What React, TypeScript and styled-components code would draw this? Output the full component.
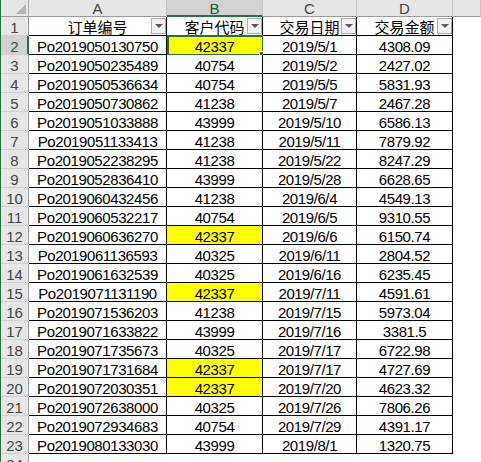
import React from "react";
import styled, { createGlobalStyle } from "styled-components";

const Global = createGlobalStyle`
  html, body { margin: 0; padding: 0; background: #ffffff; overflow: hidden; }
  body { font-family: "Liberation Sans", Arial, sans-serif; }
`;

const GREEN = "#217346";

const Sheet = styled.div`
  display: grid;
  grid-template-columns: 28px 138px 96px 94px 96px 1fr;
  grid-template-rows: 17px repeat(24, 19px);
  width: 481px;
  height: 462px;
  box-sizing: border-box;
  border-left: 1px solid ${GREEN};
  overflow: hidden;
  font-family: "Liberation Sans", Arial, sans-serif;
`;

const Corner = styled.div`
  box-sizing: border-box;
  background: #e6e6e6;
  border-right: 1px solid #ababab;
  border-bottom: 1px solid #9b9b9b;
  display: flex;
  align-items: flex-end;
  justify-content: flex-end;
  padding: 0 2px 2px 0;
`;

const ColHeader = styled.div<{ $selected?: boolean }>`
  box-sizing: border-box;
  background: ${(p) => (p.$selected ? "#d2d2d2" : "#e6e6e6")};
  border-right: 1px solid #c6c6c6;
  border-bottom: ${(p) => (p.$selected ? `2px solid ${GREEN}` : "1px solid #9b9b9b")};
  color: ${(p) => (p.$selected ? "#1d5b39" : "#444444")};
  font-size: 15px;
  line-height: 12px;
  display: flex;
  align-items: flex-end;
  justify-content: center;
  padding-bottom: ${(p) => (p.$selected ? "0px" : "1px")};
`;

const RowHeader = styled.div<{ $selected?: boolean }>`
  box-sizing: border-box;
  background: ${(p) => (p.$selected ? "#d2d2d2" : "#e6e6e6")};
  border-right: ${(p) => (p.$selected ? `2px solid ${GREEN}` : "1px solid #9b9b9b")};
  border-bottom: 1px solid #d0d0d0;
  color: ${(p) => (p.$selected ? "#1d5b39" : "#444444")};
  font-size: 15px;
  line-height: 12px;
  display: flex;
  align-items: flex-end;
  justify-content: center;
  padding-bottom: 1px;
  padding-left: ${(p) => (p.$selected ? "1px" : "0px")};
`;

const Cell = styled.div<{ $fill?: boolean; $head?: boolean }>`
  position: relative;
  box-sizing: border-box;
  background: ${(p) => (p.$fill ? "#ffff00" : "#ffffff")};
  border-right: 1px solid #000000;
  border-bottom: 1px solid #000000;
  color: #000000;
  display: flex;
  align-items: flex-end;
  justify-content: center;
  white-space: nowrap;
  font-family: ${(p) =>
    p.$head
      ? `"Noto Sans CJK SC", "Liberation Sans", sans-serif`
      : `"Liberation Sans", Arial, sans-serif`};
  font-size: 15px;
  letter-spacing: ${(p) => (p.$head ? "0px" : "-0.4px")};
  line-height: ${(p) => (p.$head ? "14px" : "12px")};
  padding-bottom: 1px;
`;

const EmptyCell = styled.div`
  background: #ffffff;
`;

const FilterButton = styled.div`
  position: absolute;
  top: 1px;
  right: 0;
  width: 15px;
  height: 16px;
  box-sizing: border-box;
  border: 1px solid #ababab;
  background: #f2f2f2;
  display: flex;
  align-items: center;
  justify-content: center;
`;

const Selection = styled.div`
  position: absolute;
  top: -1px;
  left: 0px;
  right: -2px;
  bottom: -2px;
  border: 2px solid ${GREEN};
  pointer-events: none;
`;

const FillHandle = styled.div`
  position: absolute;
  right: -4px;
  bottom: -4px;
  width: 5px;
  height: 5px;
  background: ${GREEN};
  border: 1px solid #ffffff;
`;

const CornerMark = () => (
  <svg width="10" height="10" viewBox="0 0 10 10">
    <polygon points="10,0 10,10 0,10" fill="#b4b4b4" />
  </svg>
);

const Arrow = () => (
  <svg width="8" height="4" viewBox="0 0 8 4">
    <polygon points="0,0 8,0 4,4" fill="#595959" />
  </svg>
);

type Row = [string, string, string, string, boolean];

const rows: Row[] = [
  ["Po2019050130750", "42337", "2019/5/1", "4308.09", true],
  ["Po2019050235489", "40754", "2019/5/2", "2427.02", false],
  ["Po2019050536634", "40754", "2019/5/5", "5831.93", false],
  ["Po2019050730862", "41238", "2019/5/7", "2467.28", false],
  ["Po2019051033888", "43999", "2019/5/10", "6586.13", false],
  ["Po2019051133413", "41238", "2019/5/11", "7879.92", false],
  ["Po2019052238295", "41238", "2019/5/22", "8247.29", false],
  ["Po2019052836410", "43999", "2019/5/28", "6628.65", false],
  ["Po2019060432456", "41238", "2019/6/4", "4549.13", false],
  ["Po2019060532217", "40754", "2019/6/5", "9310.55", false],
  ["Po2019060636270", "42337", "2019/6/6", "6150.74", true],
  ["Po2019061136593", "40325", "2019/6/11", "2804.52", false],
  ["Po2019061632539", "40325", "2019/6/16", "6235.45", false],
  ["Po2019071131190", "42337", "2019/7/11", "4591.61", true],
  ["Po2019071536203", "41238", "2019/7/15", "5973.04", false],
  ["Po2019071633822", "43999", "2019/7/16", "3381.5", false],
  ["Po2019071735673", "40325", "2019/7/17", "6722.98", false],
  ["Po2019071731684", "42337", "2019/7/17", "4727.69", true],
  ["Po2019072030351", "42337", "2019/7/20", "4623.32", true],
  ["Po2019072638000", "40325", "2019/7/26", "7806.26", false],
  ["Po2019072934683", "40754", "2019/7/29", "4391.17", false],
  ["Po2019080133030", "43999", "2019/8/1", "1320.75", false],
];

const headers = ["订单编号", "客户代码", "交易日期", "交易金额"];

export default function App() {
  return (
    <>
      <Global />
      <Sheet>
        <Corner>
          <CornerMark />
        </Corner>
        {["A", "B", "C", "D", ""].map((c, i) => (
          <ColHeader key={i} $selected={c === "B"}>
            {c}
          </ColHeader>
        ))}

        <RowHeader>1</RowHeader>
        {headers.map((h) => (
          <Cell key={h} $head>
            {h}
            <FilterButton>
              <Arrow />
            </FilterButton>
          </Cell>
        ))}
        <EmptyCell />

        {rows.map((r, i) => {
          const n = i + 2;
          return (
            <React.Fragment key={n}>
              <RowHeader $selected={n === 2}>{n}</RowHeader>
              <Cell>{r[0]}</Cell>
              <Cell $fill={r[4]}>
                {r[1]}
                {n === 2 && (
                  <Selection>
                    <FillHandle />
                  </Selection>
                )}
              </Cell>
              <Cell>{r[2]}</Cell>
              <Cell>{r[3]}</Cell>
              <EmptyCell />
            </React.Fragment>
          );
        })}

        <RowHeader>24</RowHeader>
        <EmptyCell />
        <EmptyCell />
        <EmptyCell />
        <EmptyCell />
        <EmptyCell />
      </Sheet>
    </>
  );
}
